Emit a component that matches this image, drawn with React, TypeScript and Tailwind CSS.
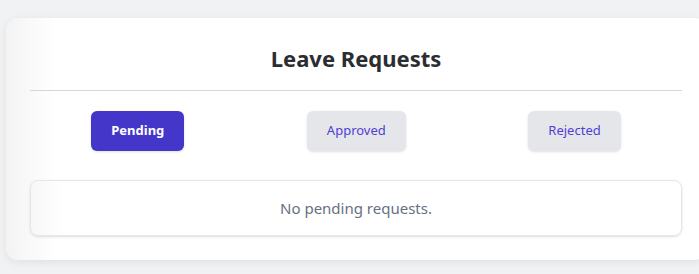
import React, { useState } from 'react';

type Tab = 'pending' | 'approved' | 'rejected';

const tabs: { id: Tab; label: string }[] = [
    { id: 'pending', label: 'Pending' },
    { id: 'approved', label: 'Approved' },
    { id: 'rejected', label: 'Rejected' },
];

const App: React.FC = () => {
    const [active, setActive] = useState<Tab>('pending');

    return (
        <div className="min-h-screen bg-[#f1f2f4] pt-[18px] pl-[6px] overflow-hidden font-['Noto_Sans',sans-serif]">
            <div className="w-[700px] rounded-xl bg-gradient-to-r from-[#f3f3f4] from-0% to-white to-[7%] p-6 shadow-[0_2px_8px_rgba(0,0,0,0.08)]">
                <h2 className="text-center text-[22px] leading-8 font-bold text-[#2b2d30] pb-4 border-b border-[#d6d5de]">
                    Leave Requests
                </h2>

                {/* Tabs */}
                <div className="flex justify-around mt-5 mb-[29px]">
                    {tabs.map(t => (
                        <button
                            key={t.id}
                            onClick={() => setActive(t.id)}
                            className={`h-10 px-5 rounded-md text-[13px] shadow-sm ${
                                active === t.id
                                    ? 'bg-[#4336c9] text-white font-bold'
                                    : 'bg-[#e5e6ea] text-[#4f3fd6]'
                            }`}
                        >
                            {t.label}
                        </button>
                    ))}
                </div>

                <div className="rounded-lg border border-[#e6e6ea] bg-gradient-to-r from-[#f7f7f8] from-0% to-white to-[5%] py-[15px] text-center text-[15px] leading-6 text-[#66707f] shadow-sm">
                    No {active} requests.
                </div>
            </div>
        </div>
    );
};

export default App;
